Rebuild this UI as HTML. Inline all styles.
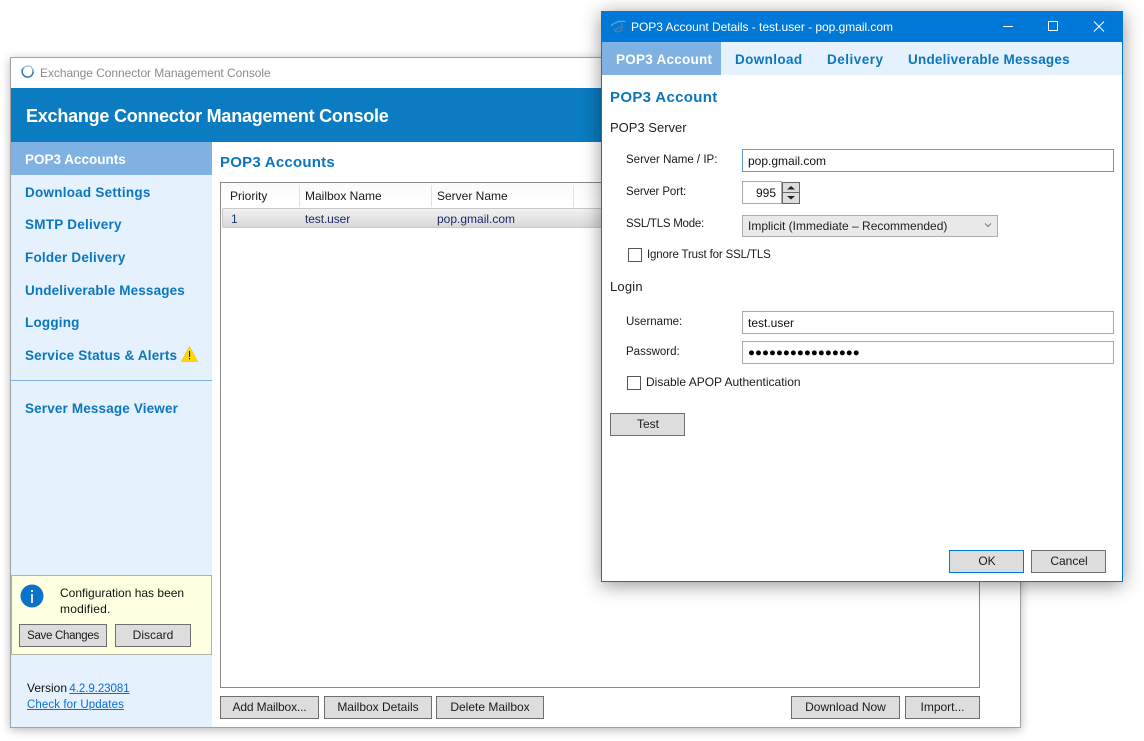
<!DOCTYPE html>
<html><head><meta charset="utf-8"><style>
html,body{margin:0;padding:0;width:1144px;height:741px;overflow:hidden;background:#fff}
body{position:relative;font-family:"Liberation Sans",sans-serif;font-size:12px;color:#1a1a1a}
.a{position:absolute;box-sizing:border-box}
.t{position:absolute;white-space:nowrap;line-height:16px;height:16px}
.n{position:absolute;white-space:nowrap;line-height:18px;height:18px;font-weight:bold;font-size:13.5px;color:#0b76bd}
.b{position:absolute;box-sizing:border-box;border:1px solid #6f6f6f;background:#dddddd;text-align:center;font-size:12px;line-height:21px;color:#1a1a1a;white-space:nowrap}
.i{position:absolute;box-sizing:border-box;border:1px solid #a9a9a9;background:#fff;line-height:22px;padding-left:5px;font-size:12px;color:#111;white-space:nowrap}
.c{position:absolute;box-sizing:border-box;width:14px;height:14px;border:1px solid #555;background:#fff}
.s{font-size:11.5px}
.t.s{margin-top:1px}
.b.s{line-height:23px}
</style></head><body>

<!-- main window -->
<div class="a" style="left:10px;top:57px;width:1011px;height:671px;background:#fff;border:1px solid #a3a3a3;box-shadow:0 2px 9px rgba(0,0,0,.28)"></div>
<svg class="a" style="left:20px;top:65px" width="15" height="14" viewBox="0 0 15 14"><path d="M4 2.500 A5.500 5.500 0 1 0 12.500 4" fill="none" stroke="#2f7aa8" stroke-width="1.500"/><path d="M1 5 Q6 -.5 11 1.500 L14 7" fill="none" stroke="#9dbccd" stroke-width="1.100"/></svg>
<div class="t" style="left:40px;top:65px;color:#8c8c8c;letter-spacing:-.06px">Exchange Connector Management Console</div>
<div class="a" style="left:11px;top:88px;width:1009px;height:54px;background:#0b7cc1"></div>
<div class="t" style="left:26px;top:106px;height:20px;line-height:20px;color:#fff;font-weight:bold;font-size:18px;letter-spacing:-.23px">Exchange Connector Management Console</div>

<!-- sidebar -->
<div class="a" style="left:11px;top:142px;width:201px;height:585px;background:#e5f1fd"></div>
<div class="a" style="left:11px;top:142px;width:201px;height:33px;background:#7fb2e2"></div>
<div class="n" style="left:25px;top:151px;color:#fff">POP3 Accounts</div>
<div class="n" style="left:25px;top:184px;letter-spacing:.24px">Download Settings</div>
<div class="n" style="left:25px;top:216px;letter-spacing:.25px">SMTP Delivery</div>
<div class="n" style="left:25px;top:249px;letter-spacing:.2px">Folder Delivery</div>
<div class="n" style="left:25px;top:282px;letter-spacing:.14px">Undeliverable Messages</div>
<div class="n" style="left:25px;top:314px;letter-spacing:.2px">Logging</div>
<div class="n" style="left:25px;top:347px;letter-spacing:.18px">Service Status &amp; Alerts</div>
<svg class="a" style="left:181px;top:346px" width="17" height="16" viewBox="0 0 17 16"><path d="M8.500 .5 L16.500 15.500 H.5 Z" fill="#ffd800" stroke="#e8c000" stroke-width=".6"/><rect x="8" y="5" width="1.100" height="6" fill="#222"/><rect x="8" y="12" width="1.100" height="1.400" fill="#222"/></svg>
<div class="a" style="left:11px;top:380px;width:201px;height:1px;background:#7fb2e2"></div>
<div class="n" style="left:25px;top:400px;letter-spacing:.15px">Server Message Viewer</div>

<!-- notice -->
<div class="a" style="left:11px;top:575px;width:201px;height:80px;background:#ffffe1;border:1px solid #b3b3a6"></div>
<svg class="a" style="left:20px;top:584px" width="24" height="24" viewBox="0 0 24 24"><circle cx="12" cy="12" r="11.500" fill="#0a72c8"/><rect x="11" y="10" width="2" height="9" fill="#cfe6fb"/><rect x="11" y="6" width="2" height="2" fill="#cfe6fb"/></svg>
<div class="t" style="left:60px;top:585px;color:#111">Configuration has been</div>
<div class="t" style="left:60px;top:601px;color:#111;letter-spacing:.2px">modified.</div>
<div class="b s" style="left:19px;top:624px;width:88px;height:23px;letter-spacing:-.3px">Save Changes</div>
<div class="b" style="left:115px;top:624px;width:76px;height:23px">Discard</div>
<div class="t" style="left:27px;top:680px;color:#111">Version <span class="s" style="color:#0a6cd6;text-decoration:underline;margin-left:-1px;letter-spacing:-.05px">4.2.9.23081</span></div>
<div class="t s" style="left:27px;top:696px;color:#0a6cd6;text-decoration:underline;letter-spacing:.1px">Check for Updates</div>

<!-- content -->
<div class="t" style="left:220px;top:153px;height:20px;line-height:20px;font-weight:bold;font-size:15px;color:#0b76bd;letter-spacing:.23px">POP3 Accounts</div>
<div class="a" style="left:220px;top:182px;width:760px;height:506px;background:#fff;border:1px solid #8a8a8a"></div>
<div class="a" style="left:221px;top:183px;width:758px;height:25px;background:linear-gradient(#fafafa,#fff)"></div>
<div class="a" style="left:299px;top:185px;width:1px;height:22px;background:#e2e2e2"></div>
<div class="a" style="left:431px;top:185px;width:1px;height:22px;background:#e2e2e2"></div>
<div class="a" style="left:573px;top:185px;width:1px;height:22px;background:#e2e2e2"></div>
<div class="t" style="left:230px;top:188px">Priority</div>
<div class="t" style="left:305px;top:188px">Mailbox Name</div>
<div class="t" style="left:437px;top:188px">Server Name</div>
<div class="a" style="left:222px;top:208px;width:756px;height:20px;background:linear-gradient(#f1f1f1,#d9d9d9);border:1px solid #c8c8c8;border-radius:2px"></div>
<div class="t" style="left:231px;top:211px;color:#1f3a66">1</div>
<div class="t" style="left:305px;top:211px;color:#1c2a6b;letter-spacing:-.1px">test.user</div>
<div class="t" style="left:437px;top:211px;color:#1c2a6b">pop.gmail.com</div>
<div class="b" style="left:220px;top:696px;width:99px;height:23px;letter-spacing:-.15px">Add Mailbox...</div>
<div class="b" style="left:324px;top:696px;width:108px;height:23px">Mailbox Details</div>
<div class="b" style="left:436px;top:696px;width:108px;height:23px">Delete Mailbox</div>
<div class="b" style="left:791px;top:696px;width:109px;height:23px">Download Now</div>
<div class="b" style="left:905px;top:696px;width:75px;height:23px">Import...</div>

<!-- dialog -->
<div class="a" style="left:601px;top:11px;width:522px;height:571px;background:#fff;border:1px solid #0078d7;box-shadow:0 3px 18px rgba(0,0,0,.42)"></div>
<div class="a" style="left:602px;top:12px;width:520px;height:30px;background:#0078d7"></div>
<svg class="a" style="left:610px;top:20px" width="17" height="14" viewBox="0 0 17 14"><path d="M1 5.500 Q8 0 15.500 1.500" fill="none" stroke="#7aa6c8" stroke-width="1.200"/><path d="M11 3 Q14 8 10.500 11 Q7 13 4 10 L11 7" fill="none" stroke="#4d7fa6" stroke-width="1.300"/></svg>
<div class="t" style="left:631px;top:19px;color:#fff;font-size:12px;letter-spacing:-.03px">POP3 Account Details - test.user - pop.gmail.com</div>
<svg class="a" style="left:1000px;top:16px" width="112" height="20" viewBox="0 0 112 20"><path d="M3 10.500H13" stroke="#fff" fill="none"/><rect x="48.500" y="5.500" width="9" height="9" stroke="#fff" fill="none"/><path d="M94 5.500L104 15.500M104 5.500L94 15.500" stroke="#fff" fill="none"/></svg>
<div class="a" style="left:602px;top:42px;width:520px;height:33px;background:#e5f1fd"></div>
<div class="a" style="left:602px;top:42px;width:119px;height:33px;background:#7fb2e2"></div>
<div class="n" style="left:616px;top:51px;color:#fff;letter-spacing:.25px">POP3 Account</div>
<div class="n" style="left:735px;top:51px;letter-spacing:.37px">Download</div>
<div class="n" style="left:827px;top:51px;letter-spacing:.5px">Delivery</div>
<div class="n" style="left:908px;top:51px;letter-spacing:.23px">Undeliverable Messages</div>
<div class="t" style="left:610px;top:88px;height:20px;line-height:20px;font-weight:bold;font-size:15px;color:#0b76bd;letter-spacing:.33px">POP3 Account</div>
<div class="t" style="left:610px;top:120px;font-size:13px;color:#222">POP3 Server</div>
<div class="t s" style="left:626px;top:151px">Server Name / IP:</div>
<div class="i" style="left:742px;top:149px;width:372px;height:23px;border-color:#5f9bd6">pop.gmail.com</div>
<div class="t s" style="left:626px;top:183px;letter-spacing:-.1px">Server Port:</div>
<div class="i" style="left:742px;top:181px;width:40px;height:23px;padding:0 5px 0 0;text-align:right">995</div>
<div class="a" style="left:782px;top:182px;width:18px;height:22px;background:#ddd;border:1px solid #666"></div>
<div class="a" style="left:783px;top:192px;width:16px;height:1px;background:#666"></div>
<svg class="a" style="left:786px;top:185px" width="10" height="16" viewBox="0 0 10 16"><path d="M1 4.500L5 1L9 4.500Z M1 11L9 11L5 14.500Z" fill="#222"/></svg>
<div class="t s" style="left:626px;top:215px;letter-spacing:-.25px">SSL/TLS Mode:</div>
<div class="a" style="left:742px;top:215px;width:256px;height:22px;background:#e9e9e9;border:1px solid #adadad"></div>
<div class="t" style="left:748px;top:218px;color:#222">Implicit (Immediate – Recommended)</div>
<svg class="a" style="left:984px;top:222px" width="8" height="6" viewBox="0 0 8 6"><path d="M1 1.500L4 4.500L7 1.500" fill="none" stroke="#777"/></svg>
<div class="c" style="left:628px;top:248px"></div>
<div class="t s" style="left:647px;top:246px;letter-spacing:-.15px">Ignore Trust for SSL/TLS</div>
<div class="t" style="left:610px;top:279px;font-size:13px;color:#222;letter-spacing:.2px">Login</div>
<div class="t s" style="left:626px;top:313px">Username:</div>
<div class="i" style="left:742px;top:311px;width:372px;height:23px">test.user</div>
<div class="t s" style="left:626px;top:343px">Password:</div>
<div class="i" style="left:742px;top:341px;width:372px;height:23px;font-size:11.500px;letter-spacing:.04px;color:#000">●●●●●●●●●●●●●●●●</div>
<div class="c" style="left:627px;top:376px"></div>
<div class="t" style="left:646px;top:374px">Disable APOP Authentication</div>
<div class="b" style="left:610px;top:413px;width:75px;height:23px;padding-left:1px">Test</div>
<div class="b" style="left:949px;top:550px;width:75px;height:23px;border-color:#0078d7;padding-left:1px">OK</div>
<div class="b" style="left:1031px;top:550px;width:75px;height:23px;padding-left:1px">Cancel</div>
</body></html>
